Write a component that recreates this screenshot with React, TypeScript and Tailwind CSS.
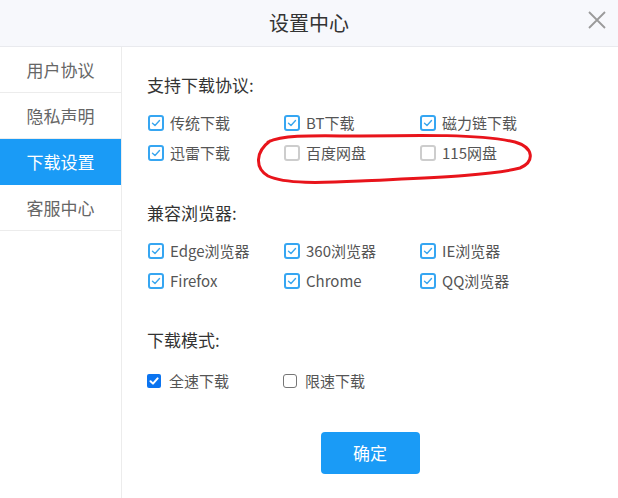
import { useState } from "react";

type Option = { label: string; checked: boolean };

const MENU = ["用户协议", "隐私声明", "下载设置", "客服中心"];

const PROTOCOLS: Option[] = [
  { label: "传统下载", checked: true },
  { label: "BT下载", checked: true },
  { label: "磁力链下载", checked: true },
  { label: "迅雷下载", checked: true },
  { label: "百度网盘", checked: false },
  { label: "115网盘", checked: false },
];

const BROWSERS: Option[] = [
  { label: "Edge浏览器", checked: true },
  { label: "360浏览器", checked: true },
  { label: "IE浏览器", checked: true },
  { label: "Firefox", checked: true },
  { label: "Chrome", checked: true },
  { label: "QQ浏览器", checked: true },
];

// outlined checkbox used in the option grids
function OutlineBox({ checked }: { checked: boolean }) {
  return (
    <span
      className={
        checked
          ? "w-[16px] h-[16px] rounded-[3px] border-2 border-[#36a6f2] bg-white flex items-center justify-center"
          : "w-[16px] h-[16px] rounded-[3px] border-2 border-[#cdcdcd] bg-white"
      }
    >
      {checked && (
        <svg width="10" height="10" viewBox="0 0 10 10" fill="none">
          <path d="M1.5 5.2 L4 7.5 L8.5 2.5" stroke="#3aa6ee" strokeWidth="1.4" strokeLinecap="round" strokeLinejoin="round" />
        </svg>
      )}
    </span>
  );
}

// browser-style checkbox for the download mode row
function NativeBox({ checked }: { checked: boolean }) {
  return (
    <span
      className={
        checked
          ? "w-[14px] h-[14px] rounded-[2px] bg-[#0b74f0] flex items-center justify-center"
          : "w-[14px] h-[14px] rounded-[3px] border border-[#767676] bg-white"
      }
    >
      {checked && (
        <svg width="10" height="10" viewBox="0 0 10 10" fill="none">
          <path d="M1.5 5.2 L4 7.6 L8.6 2.4" stroke="white" strokeWidth="2" strokeLinecap="round" strokeLinejoin="round" />
        </svg>
      )}
    </span>
  );
}

function OptionGrid({ items }: { items: Option[] }) {
  return (
    <div className="grid grid-cols-[136px_136px_136px] mt-[11px]">
      {items.map((item) => (
        <label key={item.label} className="h-[30px] flex items-center gap-[6px] pl-[1px]">
          <OutlineBox checked={item.checked} />
          <span className="text-[15px] text-[#555]">{item.label}</span>
        </label>
      ))}
    </div>
  );
}

export default function App() {
  const [active, setActive] = useState("下载设置");
  const [mode, setMode] = useState("全速下载");

  return (
    <div className="relative w-[618px] h-[498px] bg-white overflow-hidden font-['Noto_Sans_CJK_SC','Microsoft_YaHei',sans-serif]">
      {/* Header */}
      <div className="relative h-[47px] bg-[#f7f8fc] border-b border-[#e9eaee] flex items-center justify-center">
        <span className="text-[20px] text-[#333]">设置中心</span>
        <button className="absolute right-[12px] top-[11px] w-[18px] h-[18px]">
          <svg width="18" height="18" viewBox="0 0 18 18">
            <path d="M1 1 L17 17 M17 1 L1 17" stroke="#9a9a9a" strokeWidth="1.8" />
          </svg>
        </button>
      </div>

      <div className="flex h-[451px]">
        {/* Side menu */}
        <div className="w-[122px] border-r border-[#ececec] flex flex-col">
          {MENU.map((name) => (
            <div
              key={name}
              onClick={() => setActive(name)}
              className={
                active === name
                  ? "h-[46px] flex items-center justify-center text-[17px] text-white bg-[#1a9bf6] cursor-pointer"
                  : "h-[46px] flex items-center justify-center text-[17px] text-[#666] border-b border-[#ececec] cursor-pointer"
              }
            >
              {name}
            </div>
          ))}
        </div>

        {/* Settings panel */}
        <div className="flex-1 pl-[25px] pt-[26px] flex flex-col">
          <div className="h-[24px] leading-[24px] text-[17px] text-[#333]">支持下载协议:</div>
          <OptionGrid items={PROTOCOLS} />

          <div className="mt-[33px] h-[24px] leading-[24px] text-[17px] text-[#333]">兼容浏览器:</div>
          <OptionGrid items={BROWSERS} />

          <div className="mt-[32px] h-[24px] leading-[24px] text-[17px] text-[#333]">下载模式:</div>
          <div className="grid grid-cols-[136px_136px] mt-[14px]">
            {["全速下载", "限速下载"].map((m) => (
              <label key={m} onClick={() => setMode(m)} className="h-[30px] flex items-center gap-[8px]">
                <NativeBox checked={mode === m} />
                <span className="text-[15px] text-[#555]">{m}</span>
              </label>
            ))}
          </div>

          <div className="mt-[36px] -ml-[25px] flex justify-center">
            <button className="w-[99px] h-[42px] rounded-[4px] bg-[#1a9bf6] text-white text-[17px]">确定</button>
          </div>
        </div>
      </div>

      {/* Red marker circle drawn over the cloud drive options */}
      <svg className="absolute inset-0 pointer-events-none" width="618" height="498" viewBox="0 0 618 498" fill="none">
        <path
          d="M268 142 C285 134 320 136 360 136 C420 135 480 134 515 142 C535 148 534 162 520 168 C490 176 420 178 360 181 C320 183 285 184 268 176 C255 168 255 152 270 141"
          stroke="#e8141b"
          strokeWidth="3"
          strokeLinecap="round"
        />
      </svg>
    </div>
  );
}
